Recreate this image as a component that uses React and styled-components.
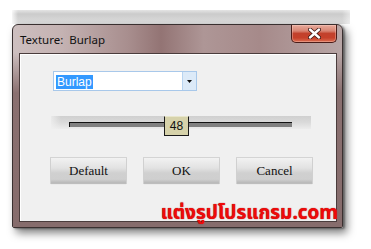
import { createGlobalStyle, styled } from "styled-components";

const GlobalStyle = createGlobalStyle`
  html, body {
    margin: 0;
    padding: 0;
    background: #ffffff;
  }
  body {
    width: 371px;
    height: 249px;
    overflow: hidden;
    font-family: "Liberation Sans", Arial, sans-serif;
  }
`;

const Stage = styled.div`
  padding: 10px 0 0 12px;
`;

const BackWindow = styled.div`
  width: 338px;
  padding-top: 14px;
  background: linear-gradient(
      to right,
      rgba(255, 255, 255, 0.8) 0px,
      rgba(255, 255, 255, 0) 6px,
      rgba(255, 255, 255, 0) 330px,
      rgba(255, 255, 255, 0.5) 338px
    ),
    linear-gradient(to bottom, #e4e4e4 0px, #cbcbcb 4px, #dedede 14px, transparent 14px);
`;

const Dialog = styled.div`
  width: 329px;
  height: 202px;
  display: flex;
  flex-direction: column;
  border: 1px solid #3a3030;
  border-radius: 6px 6px 2px 2px;
  background: linear-gradient(
    to right,
    #cdbfbf 0%,
    #c4b2b2 15%,
    #a88e8e 35%,
    #937474 45%,
    #ae9696 58%,
    #a68a8a 75%,
    #b8a6a6 100%
  );
  box-shadow: 4px 5px 9px rgba(0, 0, 0, 0.5), 2px 1px 2px rgba(0, 0, 0, 0.35);
`;

const TitleBar = styled.div`
  height: 28px;
  display: flex;
  justify-content: space-between;
  align-items: flex-start;
  padding-left: 7px;
  padding-right: 5px;
`;

const Title = styled.span`
  margin-top: 7px;
  font-family: "Noto Sans", "Open Sans", sans-serif;
  font-size: 11.5px;
  color: #111;
  white-space: pre;
`;

const CloseButton = styled.div`
  width: 44px;
  height: 17px;
  display: flex;
  align-items: center;
  justify-content: center;
  border: 1px solid #4a1c18;
  border-top: none;
  border-radius: 0 0 5px 5px;
  background: linear-gradient(
    to bottom,
    #e7aa9c 0%,
    #d98573 35%,
    #c2412c 50%,
    #c6402a 75%,
    #dc6e52 100%
  );
  box-shadow: inset 0 0 0 1px rgba(255, 220, 210, 0.35);
`;

const Frame = styled.div`
  flex: 1;
  display: flex;
  padding: 0 5px 5px 6px;
  background: linear-gradient(to bottom, transparent 0px, #8a7070 40px, #866c6c 100%);
`;

const Client = styled.div`
  flex: 1;
  display: flex;
  flex-direction: column;
  border: 1px solid #4a3c3c;
  box-shadow: inset 1px 1px 0 #ffffff;
  background: #f0f0f0;
  padding: 17px 0 0 31px;
`;

const Combo = styled.div`
  width: 142px;
  height: 18px;
  margin-left: 2px;
  display: flex;
  align-items: center;
  border: 1px solid #a8c8ea;
  background: #ffffff;
`;

const ComboText = styled.span`
  flex: 1;
  padding-left: 2px;
`;

const Selected = styled.span`
  background: #3399ff;
  color: #ffffff;
  font-size: 12px;
  line-height: 14px;
  padding: 0 1px;
`;

const ComboArrow = styled.div`
  width: 13px;
  height: 18px;
  display: flex;
  align-items: center;
  justify-content: center;
  border-left: 1px solid #b8d4f0;
  background: #dceaf8;
`;

const SliderTrack = styled.div`
  position: relative;
  width: 260px;
  height: 13px;
  margin-top: 25px;
  background: linear-gradient(to right, rgba(240, 240, 240, 0.8) 0px, rgba(240, 240, 240, 0) 10px),
    linear-gradient(to bottom, #d0d0d0 0%, #dadada 50%, #ececec 100%);
`;

const SliderLine = styled.div`
  position: absolute;
  left: 18px;
  top: 6px;
  width: 222px;
  height: 4px;
  background: #808080;
  border-top: 1px solid #111;
  border-left: 1px solid #111;
`;

const Thumb = styled.div`
  position: absolute;
  left: 113px;
  top: 0;
  width: 23px;
  height: 18px;
  display: flex;
  align-items: center;
  justify-content: center;
  background: #d6d2aa;
  border: 1px solid #1a1a1a;
  border-top-color: #e8e6cc;
  font-size: 12px;
  color: #111;
`;

const ButtonRow = styled.div`
  display: flex;
  gap: 18px;
  margin-top: 29px;
`;

const Button = styled.div`
  width: 75px;
  height: 25px;
  display: flex;
  align-items: center;
  justify-content: center;
  font-family: "Liberation Serif", "Times New Roman", serif;
  font-size: 13px;
  color: #111;
  background: linear-gradient(
    to bottom,
    #f2f2f2 0%,
    #e2e2e2 40%,
    #d0d0d0 60%,
    #cfcfcf 85%,
    #b8b8b8 100%
  );
  box-shadow: 0 0 0 1px rgba(160, 160, 160, 0.35), 0 1px 1px rgba(0, 0, 0, 0.15);
`;

const Watermark = styled.div`
  margin-top: auto;
  margin-bottom: -3px;
  margin-right: -2px;
  align-self: flex-end;
  font-family: "Noto Sans Thai", Tahoma, "Noto Sans", sans-serif;
  font-size: 19px;
  font-weight: bold;
  line-height: 20px;
  color: #ee0a0a;
  text-shadow: 0 0 1px #8a0000;
`;

export default function App() {
  return (
    <>
      <GlobalStyle />
      <Stage>
        <BackWindow>
          <Dialog>
            <TitleBar>
              <Title>Texture:  Burlap</Title>
              <CloseButton>
                <svg width="13" height="11" viewBox="0 0 13 11">
                  <path
                    d="M2 1.5 L11 9.5 M11 1.5 L2 9.5"
                    stroke="#3a1410"
                    strokeWidth="4"
                    strokeLinecap="round"
                  />
                  <path
                    d="M2 1.5 L11 9.5 M11 1.5 L2 9.5"
                    stroke="#ffffff"
                    strokeWidth="2.4"
                    strokeLinecap="round"
                  />
                </svg>
              </CloseButton>
            </TitleBar>
            <Frame>
              <Client>
                <Combo>
                  <ComboText>
                    <Selected>Burlap</Selected>
                  </ComboText>
                  <ComboArrow>
                    <svg width="5" height="3" viewBox="0 0 5 3">
                      <path d="M0 0 H5 L2.5 3 Z" fill="#111" />
                    </svg>
                  </ComboArrow>
                </Combo>
                <SliderTrack>
                  <SliderLine />
                  <Thumb>48</Thumb>
                </SliderTrack>
                <ButtonRow>
                  <Button>Default</Button>
                  <Button>OK</Button>
                  <Button>Cancel</Button>
                </ButtonRow>
                <Watermark>แต่งรูปโปรแกรม.com</Watermark>
              </Client>
            </Frame>
          </Dialog>
        </BackWindow>
      </Stage>
    </>
  );
}
